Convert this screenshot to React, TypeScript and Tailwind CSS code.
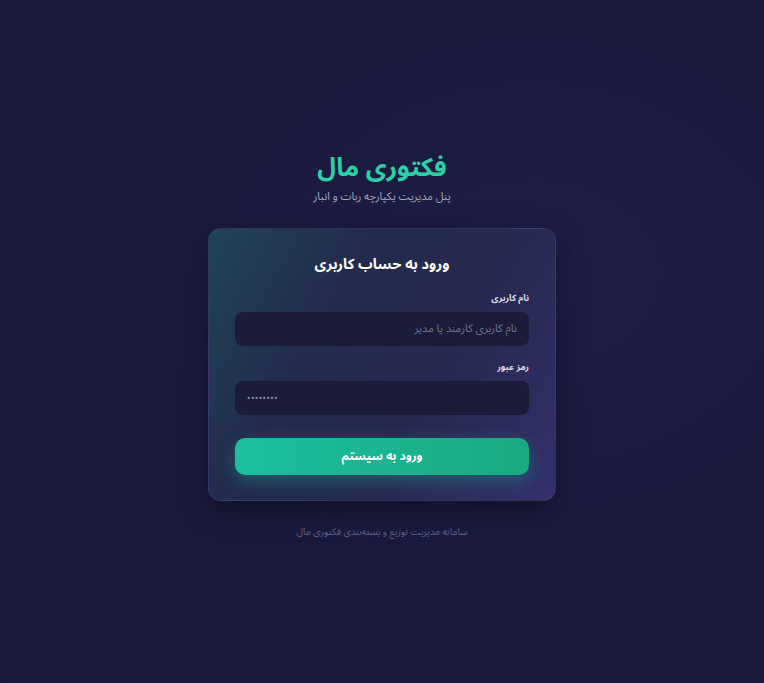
import React from "react";

export default function App() {
  return (
    <div
      dir="rtl"
      className="min-h-screen w-full flex flex-col items-center justify-center pt-[8px] bg-[radial-gradient(ellipse_at_70%_40%,#1d1d47_0%,#1a1a3e_50%,#18193b_100%)]"
      style={{ fontFamily: '"Noto Sans Arabic", "Vazirmatn", "DejaVu Sans", sans-serif' }}
    >
      <div className="flex flex-col items-center">
        <h1 className="text-[25.5px] font-bold leading-[34px] text-[#2ccfa6]">فکتوری مال</h1>
        <p className="mt-[4px] text-[11px] leading-[16px] text-[#a2a6c0]">پنل مدیریت یکپارچه ربات و انبار</p>
      </div>

      <div className="mt-[23px] w-[348px] rounded-[13px] border border-[#ffffff0d] bg-[linear-gradient(120deg,#1f4457_0%,#232b4e_33%,#272850_62%,#33306b_100%)] px-[26px] pt-[24px] pb-[25px] shadow-[0_10px_30px_rgba(0,0,0,0.35)]">
        <h2 className="text-center text-[14.5px] font-bold leading-[24px] text-white">ورود به حساب کاربری</h2>

        <div className="mt-[15px]">
          <label className="block text-[9px] font-bold leading-[14px] text-[#d9dbe9]">نام کاربری</label>
          <div className="mt-[6px] flex h-[34px] items-center rounded-[8px] bg-[#1b1c39] px-[12px] text-[11px] text-[#6f7391]">
            نام کاربری کارمند یا مدیر
          </div>
        </div>

        <div className="mt-[15px]">
          <label className="block text-[9px] font-bold leading-[14px] text-[#d9dbe9]">رمز عبور</label>
          <div className="mt-[6px] flex h-[34px] items-center justify-end rounded-[8px] bg-[#1b1c39] px-[12px] text-[9px] text-[#8e91ad]">
            <span dir="ltr" className="tracking-[0.5px]">••••••••</span>
          </div>
        </div>

        <button className="mt-[23px] flex h-[37px] w-full items-center justify-center rounded-[10px] bg-[linear-gradient(90deg,#1cbf9f_0%,#17aa82_100%)] text-[12px] font-bold text-white shadow-[0_6px_18px_rgba(26,188,156,0.35)]">
          ورود به سیستم
        </button>
      </div>

      <p className="mt-[24px] text-[9.5px] text-[#5e6288]">سامانه مدیریت توزیع و بسته‌بندی فکتوری مال</p>
    </div>
  );
}
